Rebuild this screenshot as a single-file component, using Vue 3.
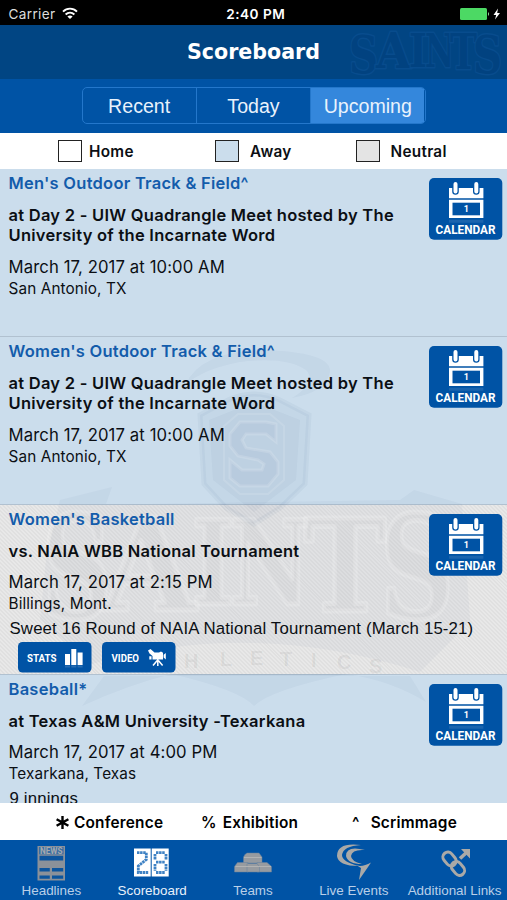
<script setup>
import { ref } from "vue";

const periods = ["Recent", "Today", "Upcoming"];
const activePeriod = ref("Upcoming");

const activeTab = ref("Scoreboard");
const tabs = ["Headlines", "Scoreboard", "Teams", "Live Events", "Additional Links"];

const games = ref([
    {
        sport: "Men's Outdoor Track & Field^",
        opponent: "at Day 2 - UIW Quadrangle Meet hosted by The University of the Incarnate Word",
        date: "March 17, 2017 at 10:00 AM",
        place: "San Antonio, TX",
        type: "away",
    },
    {
        sport: "Women's Outdoor Track & Field^",
        opponent: "at Day 2 - UIW Quadrangle Meet hosted by The University of the Incarnate Word",
        date: "March 17, 2017 at 10:00 AM",
        place: "San Antonio, TX",
        type: "away",
    },
    {
        sport: "Women's Basketball",
        opponent: "vs. NAIA WBB National Tournament",
        date: "March 17, 2017 at 2:15 PM",
        place: "Billings, Mont.",
        note: "Sweet 16 Round of NAIA National Tournament (March 15-21)",
        type: "neutral",
        media: true,
    },
    {
        sport: "Baseball*",
        opponent: "at Texas A&M University -Texarkana",
        date: "March 17, 2017 at 4:00 PM",
        place: "Texarkana, Texas",
        note: "9 innings",
        type: "away",
    },
]);

// letters of the logos: [letter, x, baseline, size, width]
const headerLetters = [
    ["S", 0, 48, 53, 29],
    ["A", 27, 43, 48, 35],
    ["I", 60, 42, 46, 18],
    ["N", 76, 42, 46, 29],
    ["T", 101, 44, 48, 27],
    ["S", 124, 48, 53, 29],
];

const logoLetters = [
    ["S", 42, 618, 142, 70],
    ["A", 102, 610, 128, 94],
    ["I", 192, 604, 116, 42],
    ["N", 230, 604, 116, 80],
    ["T", 304, 611, 128, 82],
    ["S", 380, 618, 142, 74],
];

const athletics = [
    ["A", 104, 672], ["T", 146, 670], ["H", 184, 668], ["L", 220, 666], ["E", 250, 665],
    ["T", 280, 666], ["I", 311, 667], ["C", 337, 669], ["S", 369, 673],
];
</script>

<template>
    <div class="app">
        <div class="status">
            <div class="carrier">
                <span>Carrier</span>
                <svg width="16" height="13" viewBox="0 0 16 13">
                    <g fill="none" stroke="#fff" stroke-width="1.9">
                        <path d="M1 4.6C5 .6 11 .6 15 4.6" />
                        <path d="M3.6 7.5C6.2 5 9.8 5 12.4 7.5" />
                    </g>
                    <path d="M8 12 5.4 9.4Q8 7.4 10.6 9.4Z" fill="#fff" />
                </svg>
            </div>
            <span class="clock">2:40 PM</span>
            <svg class="battery" width="44" height="14" viewBox="0 0 44 14">
                <rect x="1" y="1" width="27" height="12" rx="1.5" fill="#4cd964" />
                <path d="M29 5q2 2 0 4z" fill="#9be3a6" />
                <path d="M39 1.5 34.5 8H37.2L36 12.5 41 6H38.2Z" fill="#fff" />
            </svg>
        </div>

        <header class="header">
            <svg class="header-logo" width="157" height="54" viewBox="0 0 157 54">
                <g
                    font-family="DejaVu Serif"
                    font-weight="bold"
                    fill="#014280"
                    stroke="#084c8d"
                    stroke-width="3"
                    stroke-linejoin="round"
                    paint-order="stroke"
                >
                    <text
                        v-for="(l, i) in headerLetters"
                        :key="i"
                        :x="l[1]"
                        :y="l[2]"
                        :font-size="l[3]"
                        :textLength="l[4]"
                        lengthAdjust="spacingAndGlyphs"
                    >{{ l[0] }}</text>
                </g>
            </svg>
            <h1>Scoreboard</h1>
        </header>

        <div class="period-bar">
            <div class="segments">
                <button
                    v-for="p in periods"
                    :key="p"
                    :class="{ active: p === activePeriod }"
                    @click="activePeriod = p"
                >
                    {{ p }}
                </button>
            </div>
        </div>

        <div class="legend">
            <div class="legend-item"><i class="box"></i><span class="near">Home</span></div>
            <div class="legend-item second"><i class="box away"></i><span>Away</span></div>
            <div class="legend-item third"><i class="box neutral"></i><span>Neutral</span></div>
        </div>

        <main class="list">
            <!-- team logo behind the rows -->
            <svg class="watermark" width="507" height="634" viewBox="0 169 507 634">
                <g fill="#1b3a78" fill-opacity=".035">
                    <path d="M186 384Q200 352 262 350Q332 352 330 372Q326 392 292 398Q318 382 306 370Q286 356 240 362Q206 368 186 384Z" />
                    <path
                        d="M200 415 228 400Q254 388 280 400L309 415 305 484 280 508 254 524 226 508 204 484Z"
                        stroke="#1b3a78" stroke-opacity=".045" stroke-width="5"
                    />
                    <path d="M209 420 254 402 300 420 296 480 254 512 213 480Z" />
                    <path d="M82 706Q130 684 172 674H346Q390 680 426 702L410 676H104Z" />
                    <path d="M172 674Q240 690 254 706Q270 690 346 674Z" />
                    <path d="M60 500 112 487 106 504H146L400 500 414 490 462 504 470 620 452 640 420 672Q254 618 92 664L40 620 46 560Z" />
                </g>
                <path
                    d="M276 424V442L266 434H246L242 440 246 448 270 452 278 462V474L268 486H240L230 478V460L242 470H262L264 464 258 460 238 456 230 446V434L240 422H266Z"
                    fill="#1b3a78" fill-opacity=".035" stroke="#fff" stroke-opacity=".15" stroke-width="3"
                />
                <path d="M224 426 238 414H270L284 426V480L268 494H240L224 480Z" fill="none" stroke="#fff" stroke-opacity=".12" stroke-width="2" />
                <g
                    font-family="DejaVu Serif"
                    font-weight="bold"
                    fill="#333"
                    fill-opacity=".02"
                    stroke="#fff"
                    stroke-opacity=".17"
                    stroke-width="5"
                    stroke-linejoin="round"
                >
                    <text
                        v-for="(l, i) in logoLetters"
                        :key="i"
                        :x="l[1]"
                        :y="l[2]"
                        :font-size="l[3]"
                        :textLength="l[4]"
                        lengthAdjust="spacingAndGlyphs"
                    >{{ l[0] }}</text>
                </g>
                <g font-family="Liberation Sans" font-weight="bold" font-size="20" fill="#333" fill-opacity=".08">
                    <text v-for="(l, i) in athletics" :key="i" :x="l[1]" :y="l[2]">{{ l[0] }}</text>
                </g>
            </svg>

            <article v-for="(game, i) in games" :key="i" class="game" :class="game.type">
                <div class="info">
                    <h2>{{ game.sport }}</h2>
                    <p class="opponent">{{ game.opponent }}</p>
                    <p class="date">{{ game.date }}</p>
                    <p class="place">{{ game.place }}</p>
                    <p v-if="game.note" class="note">{{ game.note }}</p>
                    <div v-if="game.media" class="media">
                        <svg width="74" height="31" viewBox="0 0 74 31">
                            <rect width="73.5" height="30.6" rx="4.5" fill="#0053a5" />
                            <text class="btn-text" x="9" y="20" font-size="11.2" textLength="29.5" lengthAdjust="spacingAndGlyphs">STATS</text>
                            <path d="M47 12h5v11h-5zM53.3 7h5v16h-5zM59.6 10.5h5V23h-5z" fill="#fff" />
                            <path d="M47 23.6h5v2h-5zM53.3 23.6h5v2h-5zM59.6 23.6h5v2h-5z" fill="#fff" opacity=".15" />
                        </svg>
                        <svg width="74" height="31" viewBox="0 0 74 31">
                            <rect width="73.5" height="30.6" rx="4.5" fill="#0053a5" />
                            <text class="btn-text" x="9.5" y="20" font-size="11.2" textLength="27.5" lengthAdjust="spacingAndGlyphs">VIDEO</text>
                            <path d="M46 8.5 48.5 7 52.5 10.5H57L59 9.5 61 10.8V17.6H50.5V14L47.5 11.5ZM61.6 12.8 63.8 11V17.4L61.6 15.6ZM47.3 14.2h2.2v3.2h-2.2z" fill="#fff" />
                            <path d="M55.8 17v7M55.2 18.5 51 23.5M56.4 18.5l4.2 5" stroke="#fff" stroke-width="1.5" fill="none" />
                        </svg>
                    </div>
                </div>
                <svg class="calendar" width="74" height="62" viewBox="0 0 74 62">
                    <rect width="73.3" height="61.8" rx="5" fill="#0053a5" />
                    <path d="M20 10h34.4v10.2H20z" fill="#fff" />
                    <path d="M26.5 6v7.5M47.3 6v7.5" stroke="#0053a5" stroke-width="6.6" stroke-linecap="round" />
                    <path d="M26.5 6v7.5M47.3 6v7.5" stroke="#fff" stroke-width="4" stroke-linecap="round" />
                    <path d="M20 21.8h34.4V40H20z" fill="#fff" />
                    <path d="M23.5 24.7H51v12.6H23.5z" fill="#0053a5" />
                    <path d="M20 41.8h34.4v3H20z" fill="#fff" opacity=".1" />
                    <text class="btn-text" x="34.8" y="34.3" font-size="9">1</text>
                    <text class="btn-text" x="6.6" y="55.6" font-size="13.6" textLength="60" lengthAdjust="spacingAndGlyphs">CALENDAR</text>
                </svg>
            </article>
        </main>

        <div class="marks">
            <div class="mark">
                <svg width="15" height="15" viewBox="0 0 15 15">
                    <path d="M7.5 1v13M1.6 4.2l11.8 6.6M13.4 4.2 1.6 10.8" stroke="#000" stroke-width="2.4" />
                </svg>
                <span>Conference</span>
            </div>
            <div class="mark second"><b>%</b><span>Exhibition</span></div>
            <div class="mark third"><b>^</b><span>Scrimmage</span></div>
        </div>

        <nav class="tabs">
            <div
                v-for="t in tabs"
                :key="t"
                class="tab"
                :class="{ on: t === activeTab }"
                @click="activeTab = t"
            >
                <svg v-if="t === 'Headlines'" width="44" height="42" viewBox="0 0 44 42">
                    <path d="M8.5 6H36v34.5H8.5z" fill="#8b9199" />
                    <path d="M10.5 15.8h23.7v4.6H10.5zM10.5 28h10.3v3.5H10.5zM23 28h11.2v3.5H23zM10.5 35.5h10.3v3.2H10.5zM23 35.5h11.2v3.2H23z" fill="#0d559d" />
                    <path d="M10 7h24.6v7.4H10z" fill="#3a6ea3" />
                    <text x="11" y="14" font-family="Roboto" font-weight="bold" font-size="9" textLength="22.5" lengthAdjust="spacingAndGlyphs" fill="#a5a9ad">NEWS</text>
                </svg>
                <svg v-else-if="t === 'Scoreboard'" width="44" height="42" viewBox="0 0 44 42">
                    <path d="M4 8.5h16.7v28H4zM21.7 8.5h17v28h-17z" fill="#fff" />
                    <g fill="none" stroke="#3f82c4" stroke-width="2.8" stroke-dasharray="2.5 .6">
                        <path d="M7 12.7h9.3v6.8l-8 6.5v6.5h10" />
                        <path d="M26 12.7h9M36 14v6M26 22.2h9M25 14v6M25 24v7M36 24v7M26 32.5h9" />
                    </g>
                </svg>
                <svg v-else-if="t === 'Teams'" width="44" height="42" viewBox="0 0 44 42">
                    <g fill="#979ba0" stroke="#67819e" stroke-width=".5">
                        <path d="M14 14.5 16 13H28L31 17V23H12.5V17Z" />
                        <path d="M3.5 32V26.5L6.5 22.5H17V32ZM26 32V22.5H36L40.5 26.5V32Z" />
                        <path d="M16 32V23.5H26L28.5 27V32Z" />
                    </g>
                    <path d="M13 17.5h17.5M4.5 26.5h35.5" stroke="#b5b5b5" stroke-width=".9" />
                </svg>
                <svg v-else-if="t === 'Live Events'" width="44" height="42" viewBox="0 0 44 42">
                    <path d="M29 5Q5 2 5 16Q6 26 27 26Q10 22 10 15Q11 6 29 5Z" fill="#aaa9a7" />
                    <path d="M33 10Q14 5 14 16Q16 24 30 24Q19 21 19 16Q20 9 33 10Z" fill="#aaa9a7" />
                    <path d="M39 22.5Q31 27 25 25.5L29 28 27 40 35 28.5Z" fill="#aaa9a7" />
                </svg>
                <svg v-else width="44" height="42" viewBox="0 0 44 42">
                    <g fill="none" stroke="#aaa9a7" stroke-width="3">
                        <rect x="-7.5" y="-5" width="15" height="10" rx="5" transform="translate(16.5 19) rotate(50)" />
                        <rect x="-7.5" y="-5" width="15" height="10" rx="5" transform="translate(25 28.5) rotate(50)" />
                        <path d="M27 18.5 33 13" stroke-width="3.6" />
                    </g>
                    <path d="M28 9H37v9.5Z" fill="#aaa9a7" />
                </svg>
                <span>{{ t }}</span>
            </div>
        </nav>
    </div>
</template>

<style>
body {
    margin: 0;
    background: #fff;
}
</style>

<style scoped>
.app {
    display: flex;
    flex-direction: column;
    width: 507px;
    height: 900px;
    overflow: hidden;
    font-family: Inter, "Liberation Sans", sans-serif;
    color: #0b0f14;
}

h1,
h2,
p {
    margin: 0;
}

.status {
    display: grid;
    grid-template-columns: 1fr auto 1fr;
    align-items: center;
    height: 25px;
    flex: none;
    padding: 2px 4px 0 8.5px;
    box-sizing: border-box;
    background: #000;
    color: #fff;
    font-size: 13.6px;
}
.carrier {
    display: flex;
    align-items: center;
    gap: 6px;
    color: #ddd;
    letter-spacing: 0.35px;
}
.clock {
    font-weight: 600;
    letter-spacing: 0.5px;
}
.battery {
    justify-self: end;
}

.header {
    position: relative;
    display: flex;
    align-items: center;
    justify-content: center;
    height: 54px;
    flex: none;
    background: #014583;
    color: #fff;
}
.header-logo {
    position: absolute;
    right: 1px;
    top: 0;
}
.header h1 {
    position: relative;
    font-family: "DejaVu Sans", sans-serif;
    font-size: 20.6px;
    line-height: 24px;
    font-weight: bold;
}

.period-bar {
    display: flex;
    justify-content: center;
    height: 53.5px;
    flex: none;
    padding-top: 8px;
    box-sizing: border-box;
    background: #0053a5;
}
.segments {
    display: flex;
    width: 344px;
    height: 37px;
    box-sizing: border-box;
    border: 1.5px solid #2477cb;
    border-radius: 5px;
    overflow: hidden;
}
.segments button {
    flex: 1;
    padding: 1px 0 0;
    border: 0;
    border-right: 1px solid #2477cb;
    background: none;
    color: #e9f2fc;
    font-family: "Liberation Sans", sans-serif;
    font-size: 19.6px;
}
.segments button:last-child {
    border-right: 0;
}
.segments .active {
    background: #3487dc;
}

.legend {
    display: flex;
    height: 36.5px;
    flex: none;
    padding: 1px 0 0 58px;
    box-sizing: border-box;
    background: #fff;
    font-size: 15.3px;
    font-weight: 600;
    letter-spacing: 0.3px;
}
.legend-item {
    display: flex;
    align-items: center;
    width: 157px;
    flex: none;
}
.legend-item.second {
    width: 140.5px;
}
.legend-item span {
    margin-left: 11px;
}
.legend-item .near {
    margin-left: 7px;
}
.box {
    width: 24px;
    height: 22px;
    flex: none;
    box-sizing: border-box;
    border: 1px solid #222;
}
.box.away {
    background: #cbddec;
}
.box.neutral {
    background: #e4e4e4;
}

.list {
    position: relative;
    height: 634px;
    flex: none;
    overflow: hidden;
    background: #cbddec;
}
.watermark {
    position: absolute;
    top: 0;
    left: 0;
}
.game {
    display: flex;
    justify-content: space-between;
    align-items: flex-start;
    height: 168px;
    box-sizing: border-box;
    padding: 4px 4.5px 0 8.5px;
    border-bottom: 1.5px solid #b1c1d0;
}
.away {
    background: #cbddec;
}
.game.neutral {
    height: 170px;
    background: repeating-linear-gradient(45deg, #e0e0e0 0 1.4px, #e8e8e8 1.4px 2.8px);
}
.info,
.calendar {
    position: relative;
}
.calendar {
    flex: none;
    margin-top: 5px;
}
.info {
    width: 402px;
    white-space: nowrap;
}
.info h2 {
    color: #135cab;
    font-size: 16.5px;
    line-height: 20px;
    font-weight: 600;
    letter-spacing: 0.25px;
}
.opponent {
    margin-top: 11.5px;
    font-size: 16.5px;
    line-height: 20.5px;
    font-weight: 600;
    letter-spacing: 0.26px;
    white-space: normal;
}
.date {
    margin-top: 10px;
    font-size: 16.7px;
    line-height: 22px;
    letter-spacing: 0.1px;
}
.place {
    font-size: 15.3px;
    line-height: 21px;
    letter-spacing: 0.12px;
}
.note {
    margin: 5px 0 0 1px;
    font-family: "Liberation Sans", sans-serif;
    font-size: 16.8px;
    line-height: 20px;
    letter-spacing: 0.16px;
}
.media {
    display: flex;
    gap: 9.5px;
    margin: 2.5px 0 0 9.5px;
}
.btn-text {
    font-family: Roboto, sans-serif;
    font-weight: bold;
    fill: #fff;
}

.marks {
    display: flex;
    height: 37px;
    flex: none;
    align-items: center;
    padding: 1px 0 0 55px;
    box-sizing: border-box;
    background: #fff;
    color: #000;
    font-size: 15.4px;
    font-weight: 600;
    letter-spacing: 0.2px;
}
.mark {
    display: flex;
    align-items: center;
    gap: 4px;
    width: 146px;
    flex: none;
}
.mark b {
    font-weight: 600;
}
.mark.second {
    gap: 6px;
    width: 151px;
    padding-top: 1px;
}
.mark.third {
    gap: 11px;
}

.tabs {
    display: flex;
    height: 60px;
    flex: none;
    padding: 0 2px 0 1px;
    background: #0053a5;
}
.tab {
    display: flex;
    flex: 1;
    flex-direction: column;
    align-items: center;
    color: #b9cfe8;
    font-family: "Liberation Sans", sans-serif;
    font-size: 13.4px;
    white-space: nowrap;
}
.tab span {
    line-height: 18px;
}
.tab.on {
    color: #e8f1fb;
}
</style>
